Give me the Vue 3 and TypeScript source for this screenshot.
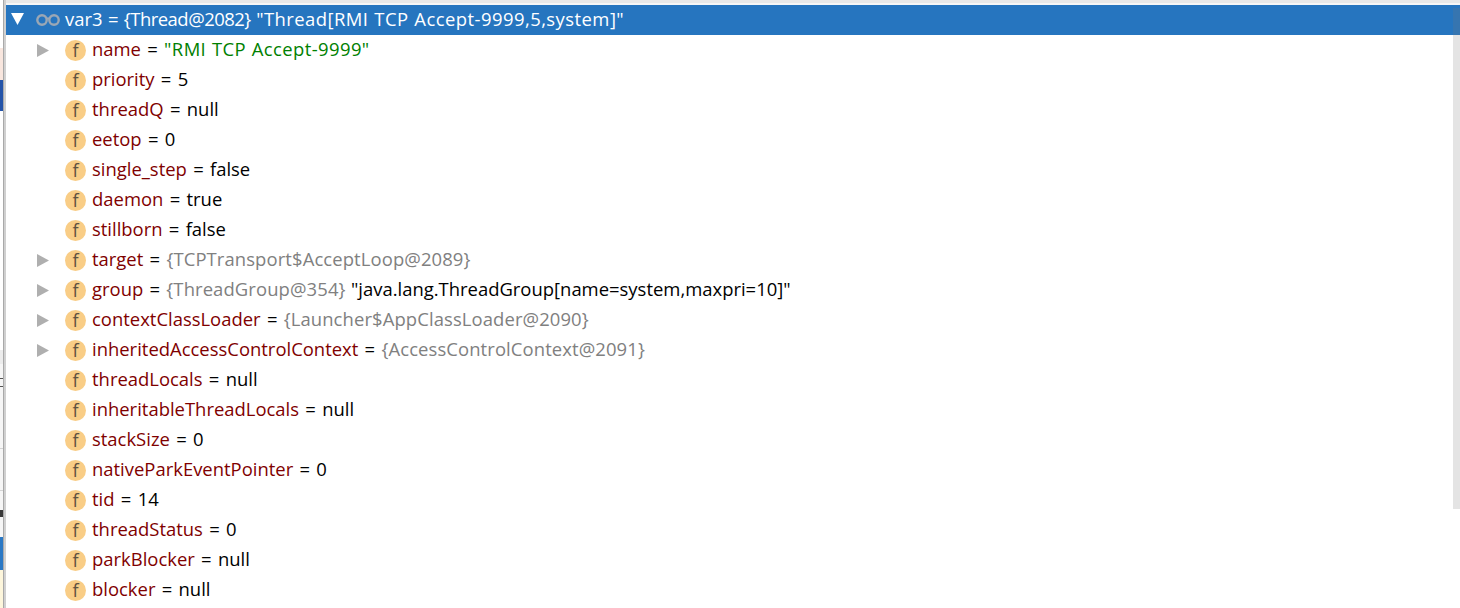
<script setup lang="ts">
type Part = { t: string; c: string }
type Row = { name: string; parts: Part[]; arrow?: boolean }
const v = 'val', o = 'obj', s = 'str'
const rows: Row[] = [
  { name: 'name', arrow: true, parts: [{ t: '"RMI TCP Accept-9999"', c: s }] },
  { name: 'priority', parts: [{ t: '5', c: v }] },
  { name: 'threadQ', parts: [{ t: 'null', c: v }] },
  { name: 'eetop', parts: [{ t: '0', c: v }] },
  { name: 'single_step', parts: [{ t: 'false', c: v }] },
  { name: 'daemon', parts: [{ t: 'true', c: v }] },
  { name: 'stillborn', parts: [{ t: 'false', c: v }] },
  { name: 'target', arrow: true, parts: [{ t: '{TCPTransport$AcceptLoop@2089}', c: o }] },
  { name: 'group', arrow: true, parts: [{ t: '{ThreadGroup@354}', c: o }, { t: ' "java.lang.ThreadGroup[name=system,maxpri=10]"', c: v }] },
  { name: 'contextClassLoader', arrow: true, parts: [{ t: '{Launcher$AppClassLoader@2090}', c: o }] },
  { name: 'inheritedAccessControlContext', arrow: true, parts: [{ t: '{AccessControlContext@2091}', c: o }] },
  { name: 'threadLocals', parts: [{ t: 'null', c: v }] },
  { name: 'inheritableThreadLocals', parts: [{ t: 'null', c: v }] },
  { name: 'stackSize', parts: [{ t: '0', c: v }] },
  { name: 'nativeParkEventPointer', parts: [{ t: '0', c: v }] },
  { name: 'tid', parts: [{ t: '14', c: v }] },
  { name: 'threadStatus', parts: [{ t: '0', c: v }] },
  { name: 'parkBlocker', parts: [{ t: 'null', c: v }] },
  { name: 'blocker', parts: [{ t: 'null', c: v }] },
]
</script>

<template>
  <div class="page">
    <div class="strip">
      <div class="b1"></div>
      <div class="b2"></div>
      <div class="b3"></div>
      <div class="b4"></div>
      <div class="b5"></div>
      <div class="b6"></div>
      <div class="b7"></div>
      <div class="b8"></div>
      <div class="b9"></div>
    </div>
    <div class="edge"></div>
    <div class="main">
      <div class="top"></div>
      <div class="content">
        <div class="selected">
          <svg class="down" width="13" height="12" viewBox="0 0 13 12"><path d="M0 0H13L6.5 12Z" fill="#fff" /></svg>
          <svg class="glasses" width="24" height="12" viewBox="0 0 24 12">
            <circle cx="6" cy="6" r="4.7" fill="none" stroke="#9aa7b5" stroke-width="2.4" />
            <circle cx="18" cy="6" r="4.7" fill="none" stroke="#9aa7b5" stroke-width="2.4" />
            <path d="M10 4.5H14" stroke="#9aa7b5" stroke-width="2" />
          </svg>
          <span class="sel-text">var3 = <span class="sel-obj">{Thread@2082}</span> <span class="sel-str">"Thread[RMI TCP Accept-9999,5,system]"</span></span>
        </div>
        <div v-for="r in rows" :key="r.name" class="row">
          <span class="arrow-slot">
            <svg v-if="r.arrow" width="12" height="13" viewBox="0 0 12 13"><path d="M0 0L12 6.5L0 13Z" fill="#afafaf" /></svg>
          </span>
          <span class="badge">f</span>
          <span class="label"><span class="name">{{ r.name }}</span><span class="val eq"> = </span><span v-for="(p, i) in r.parts" :key="i" :class="p.c">{{ p.t }}</span></span>
        </div>
        <div class="thumb"></div>
      </div>
    </div>
  </div>
</template>

<style>
html, body { margin: 0; background: #fff; overflow: hidden; }
</style>

<style scoped>
.page { width: 1460px; height: 608px; display: flex; overflow: hidden; font-family: "Open Sans", "Liberation Sans", sans-serif; }
.strip { width: 3px; display: flex; flex-direction: column; flex: none; }
.b1 { height: 48px; background: #fff; }
.b2 { height: 32px; background: #f8e6de; }
.b3 { height: 31px; background: #2353a8; }
.b4 { height: 239px; background: #fff; }
.b5 { height: 14px; background: #ececec; }
.b6 { height: 146px; background: linear-gradient(to bottom, #f6f6f6 14px, #555 14px, #555 15px, #f6f6f6 15px, #f6f6f6 22px, #555 22px, #555 23px, #f6f6f6 23px, #f6f6f6 84px, #d4d4d4 84px, #d4d4d4 85px, #f6f6f6 85px, #f6f6f6 126px, #d4d4d4 126px, #d4d4d4 127px, #f6f6f6 127px); }
.b7 { height: 27px; background: linear-gradient(to bottom, #f6f6f6 0, #f6f6f6 0, #3a3a3a 0, #3a3a3a 7px, #f6f6f6 7px); }
.b8 { height: 33px; background: #2a78c4; }
.b9 { height: 38px; background: #fdf6dc; }
.edge { width: 3px; flex: none; background: linear-gradient(to right, #a9a9a9 50%, #d0d0d0 50%); }
.main { flex: 1; display: flex; flex-direction: column; min-width: 0; }
.top { height: 5px; background: linear-gradient(to bottom, #e8e8e8 3px, #f6f6f6 3px); }
.content { flex: 1; min-height: 0; position: relative; }
.selected { height: 30px; background: #2675bf; display: flex; align-items: center; padding-left: 5px; color: #fff; font-size: 18.45px; word-spacing: 0.6px; white-space: pre; }
.down { margin-right: 12px; position: relative; top: -1.5px; }
.glasses { margin-right: 5px; }
.sel-text { position: relative; top: -2px; }
.sel-obj { letter-spacing: -0.5px; }
.sel-str { letter-spacing: 0.45px; }
.row { height: 30px; display: flex; align-items: center; font-size: 18.45px; word-spacing: 0.6px; white-space: pre; }
.arrow-slot { width: 59px; padding-left: 31px; box-sizing: border-box; display: flex; align-items: center; }
.badge { width: 21px; height: 21px; border-radius: 50%; background: #f9cd86; color: #5f5240; display: flex; align-items: center; justify-content: center; font-size: 18px; line-height: 21px; margin-right: 7px; }
.label { position: relative; top: -2px; margin-left: -1px; }
.name { color: #7f0000; }
.val { color: #000; }
.eq { word-spacing: 1.5px; }
.str { color: #008000; letter-spacing: 0.4px; }
.obj { color: #808080; letter-spacing: 0.1px; }
.thumb { position: absolute; right: 0; top: 3px; width: 7px; height: 501px; background: rgba(120, 120, 120, 0.2); }
</style>
